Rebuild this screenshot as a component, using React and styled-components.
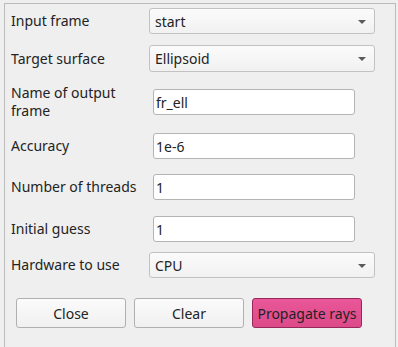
import React from "react";
import styled, { createGlobalStyle } from "styled-components";

const GlobalStyle = createGlobalStyle`
  html, body {
    margin: 0;
    padding: 0;
    background: #efefef;
    overflow: hidden;
  }
  body {
    font-family: "Noto Sans", "Open Sans", sans-serif;
    font-size: 14px;
    color: #232323;
  }
`;

const Frame = styled.div`
  box-sizing: border-box;
  margin: 3px 2px 0 4px;
  width: 392px;
  height: 360px;
  border: 1px solid #bcbcbc;
  border-bottom: none;
  padding: 4px 0 0 5px;
`;

const Row = styled.div`
  display: grid;
  grid-template-columns: 139px 1fr;
  align-items: center;
  height: ${({ $h }) => $h || 26}px;
  margin-top: ${({ $top }) => $top || 0}px;
`;

const Label = styled.div`
  line-height: 18px;
  padding-left: 1px;
`;

const Combo = styled.div`
  box-sizing: border-box;
  width: 226px;
  height: ${({ $h }) => $h || 26}px;
  display: flex;
  align-items: center;
  justify-content: space-between;
  padding: 0 8px 0 5px;
  border: 1px solid #c2c2c2;
  border-radius: 3px;
  background: linear-gradient(#fbfbfb, #f1f1f1);
`;

const Arrow = styled.span`
  width: 0;
  height: 0;
  border-left: 4px solid transparent;
  border-right: 4px solid transparent;
  border-top: 4px solid #5a5a5a;
  margin-top: 1px;
`;

const Field = styled.div`
  box-sizing: border-box;
  margin-left: 4px;
  width: 202px;
  height: 26px;
  display: flex;
  align-items: center;
  padding: 0 2px;
  background: #fff;
  border: 1px solid #b4b4b4;
  border-radius: 3px;
`;

const Buttons = styled.div`
  display: flex;
  gap: 8px;
  margin: 20px 0 0 6px;
`;

const Button = styled.div`
  box-sizing: border-box;
  width: 110px;
  height: 30px;
  display: flex;
  align-items: center;
  justify-content: center;
  border-radius: 3px;
  border: 1px solid ${({ $primary }) => ($primary ? "#98285a" : "#b0b0b0")};
  background: ${({ $primary }) =>
    $primary ? "linear-gradient(#e9579a, #dc4a89)" : "linear-gradient(#fbfbfb, #f0f0f0)"};
  color: #232323;
`;

export default function App() {
  return (
    <>
      <GlobalStyle />
      <Frame>
        <Row>
          <Label>Input frame</Label>
          <Combo>
            start
            <Arrow />
          </Combo>
        </Row>
        <Row $top={11} $h={27}>
          <Label>Target surface</Label>
          <Combo $h={27}>
            Ellipsoid
            <Arrow />
          </Combo>
        </Row>
        <Row $top={12} $h={36}>
          <Label>
            Name of output
            <br />
            frame
          </Label>
          <Field>fr_ell</Field>
        </Row>
        <Row $top={13}>
          <Label>Accuracy</Label>
          <Field>1e-6</Field>
        </Row>
        <Row $top={15}>
          <Label>Number of threads</Label>
          <Field>1</Field>
        </Row>
        <Row $top={16}>
          <Label>Initial guess</Label>
          <Field>1</Field>
        </Row>
        <Row $top={10}>
          <Label>Hardware to use</Label>
          <Combo>
            CPU
            <Arrow />
          </Combo>
        </Row>
        <Buttons>
          <Button>Close</Button>
          <Button>Clear</Button>
          <Button $primary>Propagate rays</Button>
        </Buttons>
      </Frame>
    </>
  );
}
